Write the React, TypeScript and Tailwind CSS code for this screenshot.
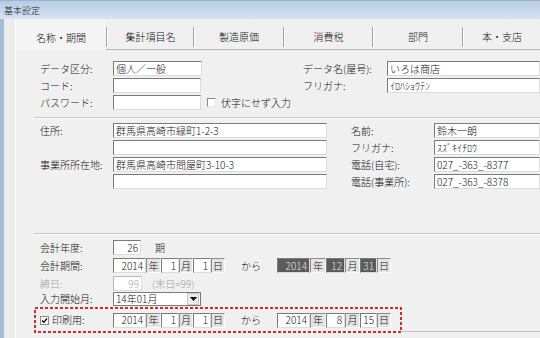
import React from "react";

const inputBase =
  "h-[15px] shrink-0 border border-t-[#7a7a7a] border-l-[#7a7a7a] border-r-[#dcdcdc] border-b-[#dcdcdc] flex items-center text-[10px] leading-none whitespace-nowrap overflow-hidden";

function Input({ className = "", children }: { className?: string; children?: React.ReactNode }) {
  return <div className={`${inputBase} bg-white px-[2px] ${className}`}>{children}</div>;
}

function NumInput({ className = "", children, dark = false }: { className?: string; children?: React.ReactNode; dark?: boolean }) {
  return (
    <div
      className={`${inputBase} justify-end pr-[2px] ${dark ? "bg-[#5c5c5c] text-[#e6e6e6]" : "bg-white"} ${className}`}
    >
      {children}
    </div>
  );
}

function Unit({ className = "", children }: { className?: string; children: React.ReactNode }) {
  return (
    <div
      className={`h-[15px] shrink-0 bg-[#e4e4e4] border border-t-[#8c8c8c] border-l-[#8c8c8c] border-r-[#fafafa] border-b-[#fafafa] flex items-center justify-center text-[10px] leading-none ${className}`}
    >
      {children}
    </div>
  );
}

function Label({ className = "", children }: { className?: string; children: React.ReactNode }) {
  return <div className={`shrink-0 text-[10px] leading-none whitespace-nowrap ${className}`}>{children}</div>;
}

function DatesFirst({ y, m, d }: { y: string; m: string; d: string }) {
  return (
    <div className="flex items-center">
      <NumInput className="w-[33px]">{y}</NumInput>
      <Unit className="w-[15px]">年</Unit>
      <NumInput className="w-[18px]">{m}</NumInput>
      <Unit className="w-[14px]">月</Unit>
      <NumInput className="w-[18px]">{d}</NumInput>
      <Unit className="w-[14px]">日</Unit>
    </div>
  );
}

function DatesSecond({ y, m, d, dark = false }: { y: string; m: string; d: string; dark?: boolean }) {
  return (
    <div className="flex items-center">
      <NumInput className="w-[33px]" dark={dark}>{y}</NumInput>
      <Unit className="w-[16px]">年</Unit>
      <NumInput className="w-[19px]" dark={dark}>{m}</NumInput>
      <Unit className="w-[15px]">月</Unit>
      <NumInput className="w-[17px]" dark={dark}>{d}</NumInput>
      <Unit className="w-[14px]">日</Unit>
    </div>
  );
}

const tabs = [
  { label: "集計項目名", cls: "w-[87px]" },
  { label: "製造原価", cls: "w-[90px]" },
  { label: "消費税", cls: "w-[89px]" },
  { label: "部門", cls: "w-[90px]" },
  { label: "本・支店", cls: "flex-1" },
];

export default function App() {
  return (
    <div className="w-[540px] h-[338px] overflow-hidden bg-[#f0f0f0] text-[#111] font-light flex flex-col font-['Noto_Sans_CJK_JP','Noto_Sans',sans-serif]">
      {/* title bar */}
      <div className="h-[19px] shrink-0 bg-linear-to-b from-[#b7cbe3] to-[#d6e4f3] border-t border-[#9fb4cc] flex items-center pl-[4px] text-[9px] leading-none text-[#1e1e1e]">
        基本設定
      </div>

      <div className="flex flex-1 min-h-0">
        <div className="w-[4px] shrink-0 bg-[#a7bbd2]" />
        <div className="w-[11px] shrink-0 bg-[#ececec]" />

        <div className="flex-1 min-w-0 flex flex-col border-l border-white">
          {/* tabs */}
          <div className="flex h-[31px] shrink-0">
            <div className="w-[90px] shrink-0 flex items-center justify-center pt-[6px] text-[10px] leading-none bg-[#f4f4f4]">
              名称・期間
            </div>
            {tabs.map((t) => (
              <div key={t.label} className={`${t.cls} shrink-0 flex border-b border-[#b8b8b8]`}>
                <div className="mt-[8px] mb-[2px] w-[2px] border-l border-[#a3a3a3] bg-white" />
                <div className="flex-1 flex items-center justify-center pt-[6px] text-[10px] leading-none">{t.label}</div>
              </div>
            ))}
          </div>

          {/* section 1 */}
          <div className="mt-[11px] pl-[24px] flex flex-col gap-[2px]">
            <div className="flex items-center">
              <div className="w-[263px] shrink-0 flex items-center">
                <Label className="w-[73px]">データ区分:</Label>
                <Input className="w-[89px]">個人／一般</Input>
              </div>
              <Label className="w-[84px]">データ名(屋号):</Label>
              <Input className="flex-1">いろは商店</Input>
            </div>
            <div className="flex items-center">
              <div className="w-[263px] shrink-0 flex items-center">
                <Label className="w-[73px]">コード:</Label>
                <Input className="w-[88px]" />
              </div>
              <Label className="w-[84px]">フリガナ:</Label>
              <Input className="flex-1 text-[9px]">ｲﾛﾊｼｮｳﾃﾝ</Input>
            </div>
            <div className="flex items-center">
              <Label className="w-[73px]">パスワード:</Label>
              <Input className="w-[88px]" />
              <div className="ml-[6px] w-[9px] h-[9px] border border-t-[#8a8a8a] border-l-[#8a8a8a] border-r-[#e8e8e8] border-b-[#e8e8e8] bg-white" />
              <Label className="ml-[5px]">伏字にせず入力</Label>
            </div>
          </div>

          <div className="mt-[7px] ml-[18px] h-[2px] border-t border-[#c6c6c6] border-b border-b-white" />

          {/* section 2 */}
          <div className="mt-[4px] pl-[24px] flex flex-col gap-[2px]">
            {[
              ["住所:", "群馬県高崎市緑町1-2-3", "名前:", "鈴木一朗"],
              ["", "", "フリガナ:", "ｽｽﾞｷｲﾁﾛｳ"],
              ["事業所所在地:", "群馬県高崎市問屋町3-10-3", "電話(自宅):", "027_-363_-8377"],
              ["", "", "電話(事業所):", "027_-363_-8378"],
            ].map((r, i) => (
              <div key={i} className="flex items-center">
                <div className="w-[311px] shrink-0 flex items-center">
                  <Label className="w-[73px]">{r[0]}</Label>
                  <Input className="w-[214px]">{r[1]}</Input>
                </div>
                <Label className="w-[83px]">{r[2]}</Label>
                <Input className={`flex-1 ${i === 1 ? "text-[9px]" : ""}`}>{r[3]}</Input>
              </div>
            ))}
          </div>

          <div className="mt-[44px] ml-[18px] h-[2px] border-t border-[#c6c6c6] border-b border-b-white" />

          {/* section 3 */}
          <div className="mt-[5px] pl-[24px] flex flex-col">
            <div className="flex items-center">
              <Label className="w-[73px]">会計年度:</Label>
              <NumInput className="w-[28px]">26</NumInput>
              <Label className="ml-[14px]">期</Label>
            </div>
            <div className="mt-[3px] flex items-center">
              <Label className="w-[73px]">会計期間:</Label>
              <DatesFirst y="2014" m="1" d="1" />
              <Label className="ml-[16px] w-[36px]">から</Label>
              <DatesSecond y="2014" m="12" d="31" dark />
            </div>
            <div className="mt-[3px] flex items-center text-[#a0a0a0]">
              <Label className="w-[73px]">締日:</Label>
              <NumInput className="w-[29px] !border-t-[#b8b8b8] !border-l-[#b8b8b8]">99</NumInput>
              <Label className="ml-[10px]">(末日=99)</Label>
            </div>
            <div className="mt-[1px] flex items-center">
              <Label className="w-[73px]">入力開始月:</Label>
              <div className="w-[88px] h-[14px] bg-white border border-[#7a7a7a] flex items-center">
                <div className="flex-1 pl-[2px] text-[10px] leading-none">14年01月</div>
                <div className="w-[12px] h-[12px] mr-[1px] bg-[#ececec] border border-[#c8c8c8] flex items-center justify-center">
                  <svg width="7" height="4" viewBox="0 0 7 4">
                    <path d="M0 0 H7 L3.5 4 Z" fill="#000" />
                  </svg>
                </div>
              </div>
            </div>
          </div>

          <div className="mt-[1px] flex items-end">
            <div className="relative ml-[18px] w-[368px] h-[26px] shrink-0 p-[2px] py-[5px] pl-[6px] flex items-center">
              <div className="w-[73px] shrink-0 flex items-center">
                <div className="w-[9px] h-[9px] bg-white border border-[#8a8a8a] flex items-center justify-center">
                  <svg width="7" height="7" viewBox="0 0 7 7">
                    <path d="M1 3.5 L2.8 5.3 L6 1.5" stroke="#000" strokeWidth="1.3" fill="none" />
                  </svg>
                </div>
                <Label className="ml-[3px]">印刷用:</Label>
              </div>
              <DatesFirst y="2014" m="1" d="1" />
              <Label className="ml-[16px] w-[36px]">から</Label>
              <DatesSecond y="2014" m="8" d="15" />
              <svg className="absolute inset-0 pointer-events-none" width="368" height="26" viewBox="0 0 368 26">
                <rect x="1" y="1" width="366" height="24" fill="none" stroke="#d42a2a" strokeWidth="2" strokeDasharray="3 2" />
              </svg>
            </div>
            <div className="flex-1 border-b border-[#c4c4c4] mb-[1px]" />
          </div>
        </div>
      </div>
    </div>
  );
}
